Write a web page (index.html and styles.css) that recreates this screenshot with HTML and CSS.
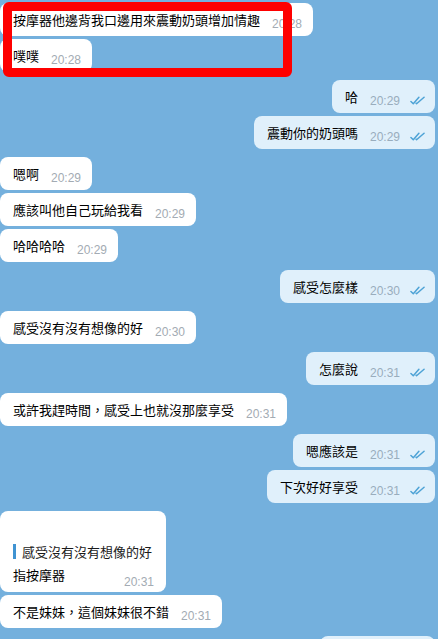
FILE: index.html
```html
<!DOCTYPE html>
<html lang="zh-TW">
<head>
    <meta charset="UTF-8">
    <meta name="viewport" content="width=device-width, initial-scale=1.0">
    <title>聊天記錄</title>
    <link rel="stylesheet" href="styles.css">
</head>
<body>
    <div class="chat">
        <div class="msg in">
            <span class="text">按摩器他邊背我口邊用來震動奶頭增加情趣</span>
            <span class="time">20:28</span>
        </div>
        <div class="msg in">
            <span class="text">噗噗</span>
            <span class="time">20:28</span>
        </div>

        <div class="msg out group">
            <span class="text">哈</span>
            <span class="time">20:29</span>
            <svg class="ticks" viewBox="0 0 16 9"><path d="M1 5.5l2.5 2.5L9.5 1M6.5 7.5l0.5 0.5L15 1"/></svg>
        </div>
        <div class="msg out">
            <span class="text">震動你的奶頭嗎</span>
            <span class="time">20:29</span>
            <svg class="ticks" viewBox="0 0 16 9"><path d="M1 5.5l2.5 2.5L9.5 1M6.5 7.5l0.5 0.5L15 1"/></svg>
        </div>

        <div class="msg in group">
            <span class="text">嗯啊</span>
            <span class="time">20:29</span>
        </div>
        <div class="msg in">
            <span class="text">應該叫他自己玩給我看</span>
            <span class="time">20:29</span>
        </div>
        <div class="msg in">
            <span class="text">哈哈哈哈</span>
            <span class="time">20:29</span>
        </div>

        <div class="msg out group">
            <span class="text">感受怎麼樣</span>
            <span class="time">20:30</span>
            <svg class="ticks" viewBox="0 0 16 9"><path d="M1 5.5l2.5 2.5L9.5 1M6.5 7.5l0.5 0.5L15 1"/></svg>
        </div>

        <div class="msg in group">
            <span class="text">感受沒有沒有想像的好</span>
            <span class="time">20:30</span>
        </div>

        <div class="msg out group">
            <span class="text">怎麼說</span>
            <span class="time">20:31</span>
            <svg class="ticks" viewBox="0 0 16 9"><path d="M1 5.5l2.5 2.5L9.5 1M6.5 7.5l0.5 0.5L15 1"/></svg>
        </div>

        <div class="msg in group">
            <span class="text">或許我趕時間，感受上也就沒那麼享受</span>
            <span class="time">20:31</span>
        </div>

        <div class="msg out group">
            <span class="text">嗯應該是</span>
            <span class="time">20:31</span>
            <svg class="ticks" viewBox="0 0 16 9"><path d="M1 5.5l2.5 2.5L9.5 1M6.5 7.5l0.5 0.5L15 1"/></svg>
        </div>
        <div class="msg out">
            <span class="text">下次好好享受</span>
            <span class="time">20:31</span>
            <svg class="ticks" viewBox="0 0 16 9"><path d="M1 5.5l2.5 2.5L9.5 1M6.5 7.5l0.5 0.5L15 1"/></svg>
        </div>

        <div class="msg in group reply">
            <div class="quote">感受沒有沒有想像的好</div>
            <div class="reply-row">
                <span class="text">指按摩器</span>
                <span class="time">20:31</span>
            </div>
        </div>
        <div class="msg in">
            <span class="text">不是妹妹，這個妹妹很不錯</span>
            <span class="time">20:31</span>
        </div>

        <!-- 下一則訊息，只露出頂端 -->
        <div class="msg out group stub"></div>
    </div>

    <!-- 標記框 -->
    <div class="highlight"></div>
</body>
</html>
```

FILE: styles.css
```css
html, body {
    height: 100%;
}
body {
    margin: 0;
    background: #74b0dd;
    font-family: "Noto Sans CJK TC", "Noto Sans", sans-serif;
    overflow: hidden;
}
.chat {
    display: flex;
    flex-direction: column;
    align-items: flex-start;
    padding-top: 3px;
}
.msg {
    display: flex;
    align-items: flex-end;
    box-sizing: border-box;
    height: 33px;
    padding: 8px 11px 5px 13px;
    border-radius: 8px;
    margin-top: 3px;
}
.msg:first-child {
    margin-top: 0;
}
.msg.group {
    margin-top: 8px;
}
.in {
    background: #fff;
    margin-left: 0;
}
.out {
    background: #e0f0fb;
    align-self: flex-end;
    margin-right: 3px;
    padding-right: 10px;
}
.stub {
    width: 115px;
}
.text {
    font-size: 13px;
    line-height: 18px;
    color: #000;
    margin-bottom: 2px;
    white-space: nowrap;
}
.time {
    font-family: "Liberation Sans", Arial, sans-serif;
    font-size: 12px;
    line-height: 14px;
    color: #a3abb3;
    margin-left: 12px;
}
.out .time {
    color: #99adbd;
}
.ticks {
    width: 15px;
    height: 9px;
    margin-left: 10px;
    margin-bottom: 3px;
    fill: none;
    stroke: #4ea3d6;
    stroke-width: 1.6;
    stroke-linecap: round;
    stroke-linejoin: round;
}
.reply {
    display: block;
    height: 81px;
    padding: 33px 14px 3px 13px;
}
.quote {
    font-size: 13px;
    line-height: 15px;
    color: #1a1a1a;
    border-left: 3px solid #3f93d2;
    padding-left: 6px;
    white-space: nowrap;
}
.reply-row {
    display: flex;
    justify-content: space-between;
    align-items: flex-end;
    margin-top: 7px;
}
.reply-row .text {
    margin-bottom: 5px;
}
.reply-row .time {
    margin-right: -2px;
}
.highlight {
    position: absolute;
    left: 3px;
    top: 2px;
    width: 289px;
    height: 75px;
    box-sizing: border-box;
    border: 9px solid #fe0000;
    border-radius: 6px;
}
```
